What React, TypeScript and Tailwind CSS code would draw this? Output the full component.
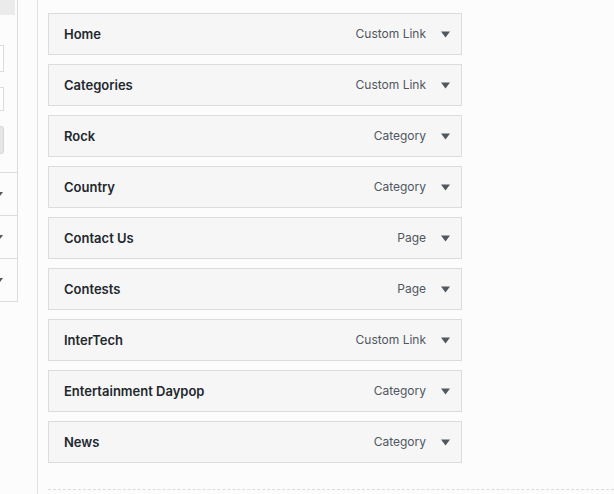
import React from 'react';

const items = [
    { title: 'Home', type: 'Custom Link' },
    { title: 'Categories', type: 'Custom Link' },
    { title: 'Rock', type: 'Category' },
    { title: 'Country', type: 'Category' },
    { title: 'Contact Us', type: 'Page' },
    { title: 'Contests', type: 'Page' },
    { title: 'InterTech', type: 'Custom Link' },
    { title: 'Entertainment Daypop', type: 'Category' },
    { title: 'News', type: 'Category' },
];

function Caret() {
    return (
        <svg width="9" height="7" viewBox="0 0 9 7" className="shrink-0 mb-[2px]">
            <path d="M0 0.5 H9 L4.5 6.5 Z" fill="#50575e" />
        </svg>
    );
}

export default function App() {
    return (
        <div
            className="w-[614px] h-[494px] bg-[#fcfcfc] flex overflow-hidden text-[#23282d]"
            style={{ fontFamily: 'Inter, "Liberation Sans", sans-serif' }}
        >
            {/* Left panel, mostly cut off */}
            <div className="w-[18px] shrink-0 h-[302px] overflow-hidden border-r border-b border-[#dcdcde]">
                <div className="w-[280px] ml-[-263px] flex flex-col">
                    <div className="h-[15px] bg-[#ebebeb] mr-[2px]"></div>
                    <div className="h-[30px]"></div>
                    <div className="h-[27px] mr-[13px] border border-[#dcdcde] bg-white"></div>
                    <div className="h-[15px]"></div>
                    <div className="h-[24px] mr-[13px] border border-[#dcdcde] bg-white"></div>
                    <div className="h-[15px]"></div>
                    <div className="h-[28px] mr-[13px] bg-[#e6e6e6] border border-[#d6d6d6] rounded-[3px]"></div>
                    <div className="h-[18px]"></div>
                    {[0, 1, 2].map(i => (
                        <div key={i} className="h-[43px] border-t border-[#dcdcde] flex items-center justify-end pr-[14px]">
                            <svg width="6" height="4" viewBox="0 0 6 4">
                                <path d="M0 0 H6 L3 4 Z" fill="#50575e" />
                            </svg>
                        </div>
                    ))}
                </div>
            </div>

            {/* Spacer column with divider */}
            <div className="w-[20px] shrink-0 border-r border-[#e2e2e2]"></div>

            {/* Menu structure */}
            <div className="flex-1 flex flex-col pl-[10px] pt-[13px]">
                <div className="flex flex-col gap-[9px] w-[414px]">
                    {items.map(item => (
                        <div
                            key={item.title}
                            className="h-[42px] border border-[#dcdcde] bg-[#f6f6f6] flex items-center pt-[2px] pl-[15px] pr-[11px]"
                        >
                            <span className="flex-1 text-[13px] font-semibold">{item.title}</span>
                            <span className="text-[12px] text-[#50575e] mr-[15px] mb-[3px]">{item.type}</span>
                            <Caret />
                        </div>
                    ))}
                </div>
                <div className="mt-[26px] border-t border-dashed border-[#dcdcde]"></div>
            </div>
        </div>
    );
}
